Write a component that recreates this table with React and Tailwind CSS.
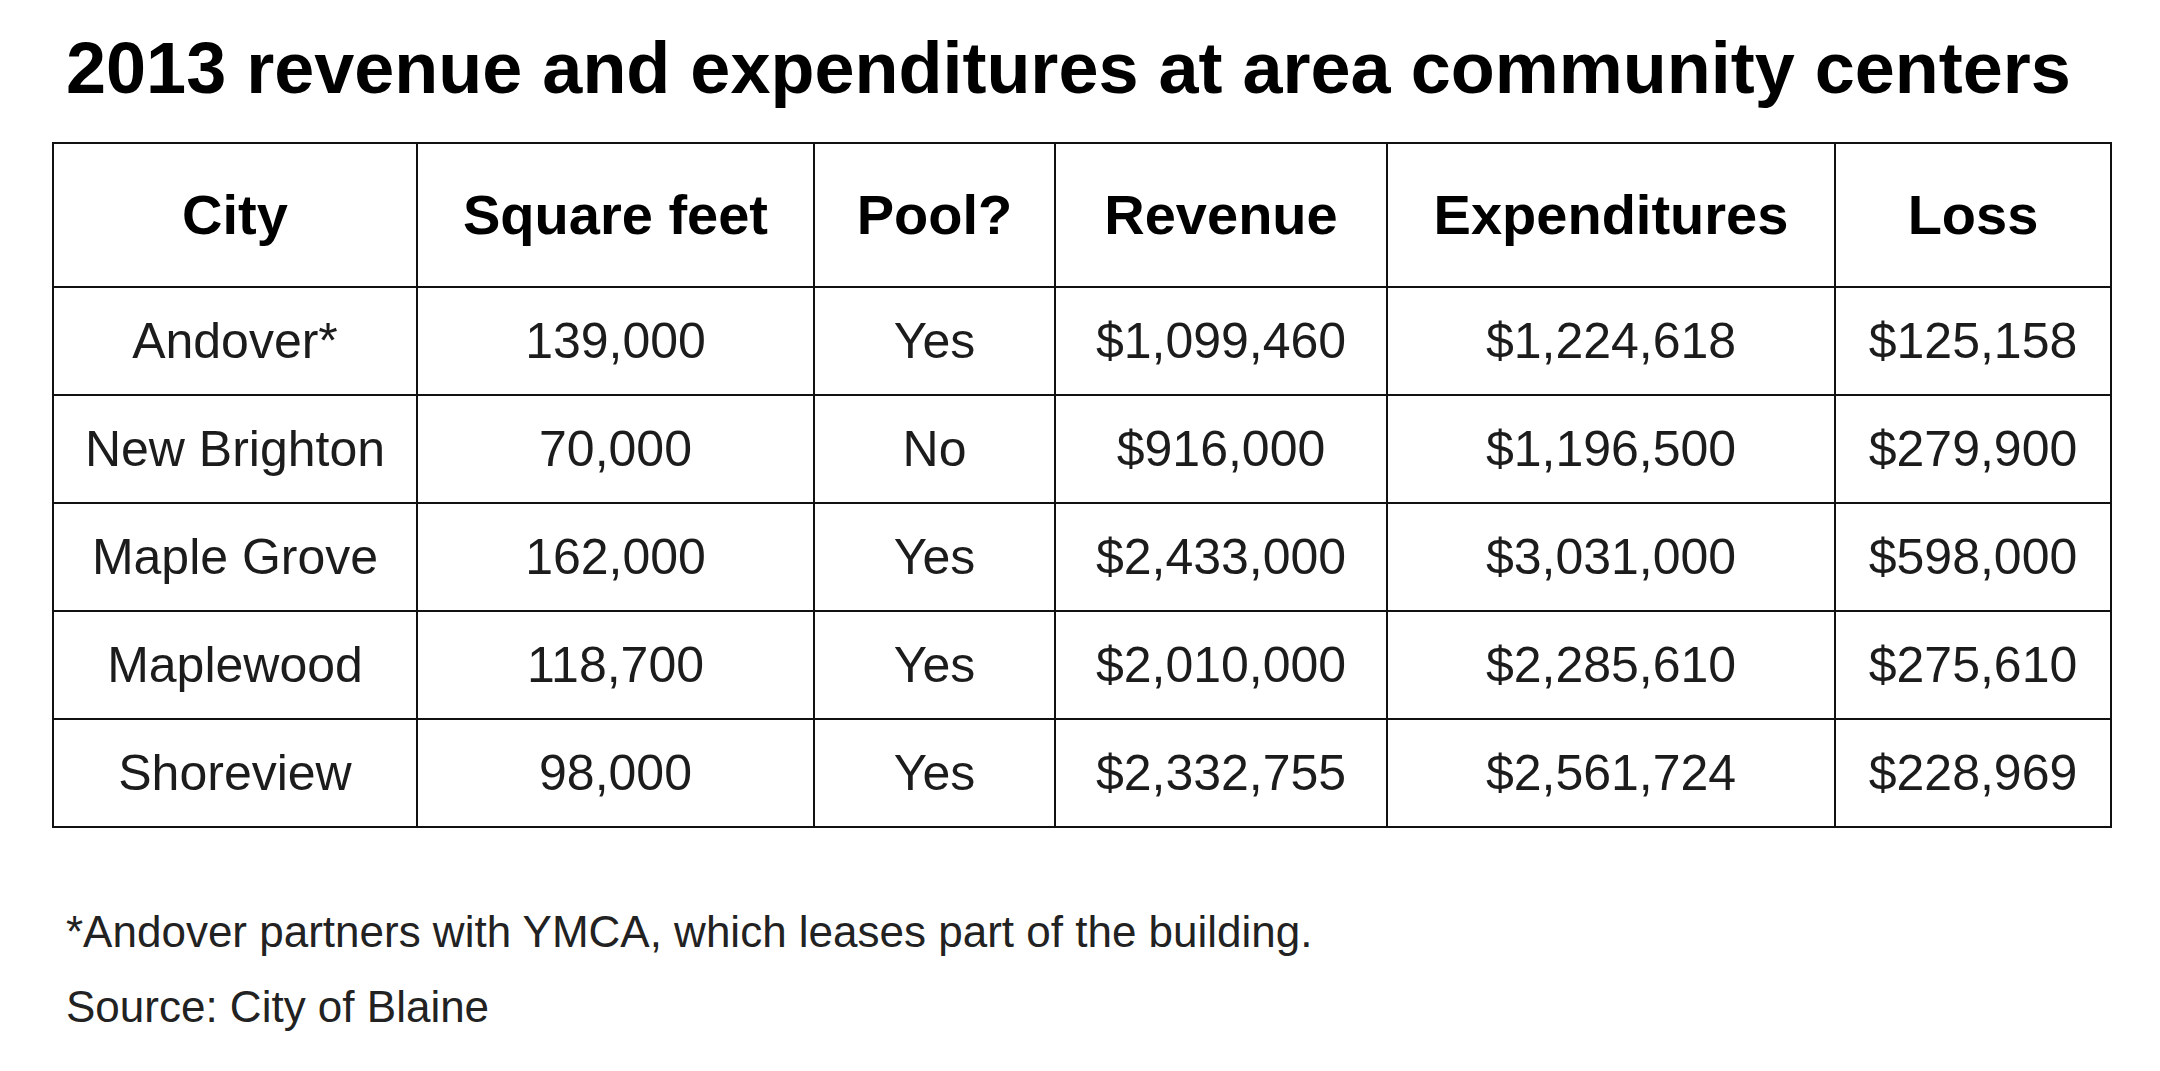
const columns = [
  { label: 'City', width: 'w-[364px]' },
  { label: 'Square feet', width: 'w-[397px]' },
  { label: 'Pool?', width: 'w-[241px]' },
  { label: 'Revenue', width: 'w-[332px]' },
  { label: 'Expenditures', width: 'w-[448px]' },
  { label: 'Loss', width: 'w-[276px]' },
];

const rows = [
  ['Andover*', '139,000', 'Yes', '$1,099,460', '$1,224,618', '$125,158'],
  ['New Brighton', '70,000', 'No', '$916,000', '$1,196,500', '$279,900'],
  ['Maple Grove', '162,000', 'Yes', '$2,433,000', '$3,031,000', '$598,000'],
  ['Maplewood', '118,700', 'Yes', '$2,010,000', '$2,285,610', '$275,610'],
  ['Shoreview', '98,000', 'Yes', '$2,332,755', '$2,561,724', '$228,969'],
];

export default function App() {
  return (
    <div className="w-[2160px] h-[1071px] bg-white text-black font-['Liberation_Sans',Arial,sans-serif]">
      <h1 className="pl-[66px] pt-[32px] text-[72px] font-bold leading-none">
        2013 revenue and expenditures at area community centers
      </h1>

      <table className="ml-[52px] mt-[38px] border-collapse table-fixed w-[2058px]">
        <thead>
          <tr className="h-[144px]">
            {columns.map((col) => (
              <th
                key={col.label}
                className={`${col.width} border-2 border-[#111] text-center align-middle text-[56px] font-bold leading-none`}
              >
                {col.label}
              </th>
            ))}
          </tr>
        </thead>
        <tbody>
          {rows.map((row) => (
            <tr key={row[0]} className="h-[108px]">
              {row.map((cell, i) => (
                <td
                  key={i}
                  className="border-2 border-[#111] text-center align-middle text-[50px] leading-none text-[#1c1c1c]"
                >
                  {cell}
                </td>
              ))}
            </tr>
          ))}
        </tbody>
      </table>

      {/* notes under the table */}
      <div className="pl-[66px] mt-[66px] text-[44px] leading-[75px] text-[#222]">
        <p>*Andover partners with YMCA, which leases part of the building.</p>
        <p>Source: City of Blaine</p>
      </div>
    </div>
  );
}
